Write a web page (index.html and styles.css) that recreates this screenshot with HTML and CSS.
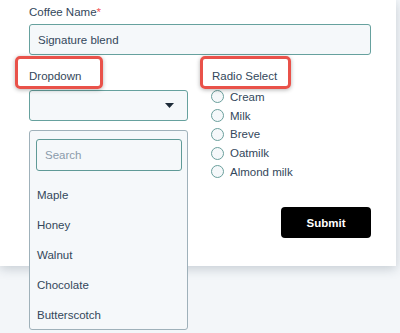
FILE: index.html
```html
<!DOCTYPE html>
<html lang="en">
<head>
  <meta charset="UTF-8" />
  <meta name="viewport" content="width=device-width, initial-scale=1.0"/>
  <title>Coffee Order Form</title>
  <link rel="stylesheet" href="styles.css">
</head>
<body>
  <div class="card">
    <form class="form">
      <div class="field">
        <label class="label">Coffee Name<span class="required">*</span></label>
        <input class="input" type="text" value="Signature blend" />
      </div>

      <div class="row">
        <div class="col col-left">
          <label class="label highlight highlight-dropdown">Dropdown</label>
          <div class="select">
            <svg width="9" height="5" viewBox="0 0 9 5"><path d="M0 0 L9 0 L4.5 5 Z" fill="#1d2b38"/></svg>
          </div>
          <div class="menu">
            <input class="input search" type="text" placeholder="Search" />
            <ul class="options">
              <li>Maple</li>
              <li>Honey</li>
              <li>Walnut</li>
              <li>Chocolate</li>
              <li>Butterscotch</li>
            </ul>
          </div>
        </div>

        <div class="col col-right">
          <label class="label highlight highlight-radio">Radio Select</label>
          <div class="radios">
            <label class="radio"><span class="dot"></span>Cream</label>
            <label class="radio"><span class="dot"></span>Milk</label>
            <label class="radio"><span class="dot"></span>Breve</label>
            <label class="radio"><span class="dot"></span>Oatmilk</label>
            <label class="radio"><span class="dot"></span>Almond milk</label>
          </div>
          <button class="submit" type="button">Submit</button>
        </div>
      </div>
    </form>
  </div>
</body>
</html>
```

FILE: styles.css
```css
* {
  margin: 0;
  padding: 0;
  box-sizing: border-box;
  font-family: 'Liberation Sans', Arial, Helvetica, sans-serif;
}

html, body {
  min-height: 100vh;
}

body {
  background: #f3f6f9;
  color: #33475b;
  font-size: 11.5px;
}

.card {
  position: relative;
  width: 396px;
  height: 266px;
  background: #fff;
  padding: 5px 25px 0 29px;
  box-shadow: 0 3px 10px rgba(45, 62, 80, 0.22);
}

.label {
  display: block;
  line-height: 14px;
  color: #33475b;
}

.required {
  color: #f2545b;
}

.input {
  display: block;
  width: 342px;
  height: 31px;
  margin-top: 5px;
  padding: 0 8px;
  font-size: 11.5px;
  color: #33475b;
  background: #f5f8fa;
  border: 1px solid #66a19e;
  border-radius: 3px;
  outline: none;
}

.input::placeholder {
  color: #8b9bab;
}

.row {
  display: flex;
  gap: 24px;
  margin-top: 14px;
}

.col-left {
  position: relative;
  width: 159px;
}

.col-right {
  flex: 1;
  display: flex;
  flex-direction: column;
}

.highlight {
  position: relative;
}

.highlight::after {
  content: '';
  position: absolute;
  top: -13px;
  height: 27px;
  border: 3px solid #e9524a;
  border-radius: 5px;
  box-shadow: 0 1px 4px rgba(0, 0, 0, 0.3);
}

.highlight-dropdown::after {
  left: -14px;
  width: 82px;
}

.highlight-radio::after {
  left: -12px;
  width: 85px;
}

.select {
  display: flex;
  justify-content: flex-end;
  align-items: center;
  height: 31px;
  margin-top: 7px;
  padding-right: 13px;
  background: #f5f8fa;
  border: 1px solid #66a19e;
  border-radius: 3px;
}

.menu {
  position: absolute;
  z-index: 10;
  top: 61px;
  left: 0;
  width: 159px;
  height: 200px;
  padding: 8px 6px 0;
  background: #f5f8fa;
  border: 1px solid #9fb1ba;
  border-radius: 3px;
}

.search {
  width: 146px;
  height: 32px;
  margin-top: 0;
  border-width: 1.5px;
  border-color: #5f9a97;
}

.options {
  list-style: none;
  margin-top: 9px;
}

.options li {
  height: 30px;
  line-height: 30px;
  padding-left: 1px;
  color: #33475b;
}

.radios {
  margin-top: 4.6px;
}

.radio {
  display: flex;
  align-items: center;
  gap: 6px;
  height: 18.75px;
  margin-left: -1px;
  color: #33475b;
}

.dot {
  width: 13px;
  height: 13px;
  border: 1px solid #6a9f9c;
  border-radius: 50%;
  background: #f5f8fa;
}

.submit {
  align-self: flex-end;
  width: 90px;
  height: 31px;
  margin-top: 26px;
  background: #000;
  color: #fff;
  font-size: 11.5px;
  font-weight: bold;
  border: none;
  border-radius: 4px;
  cursor: pointer;
}
```
